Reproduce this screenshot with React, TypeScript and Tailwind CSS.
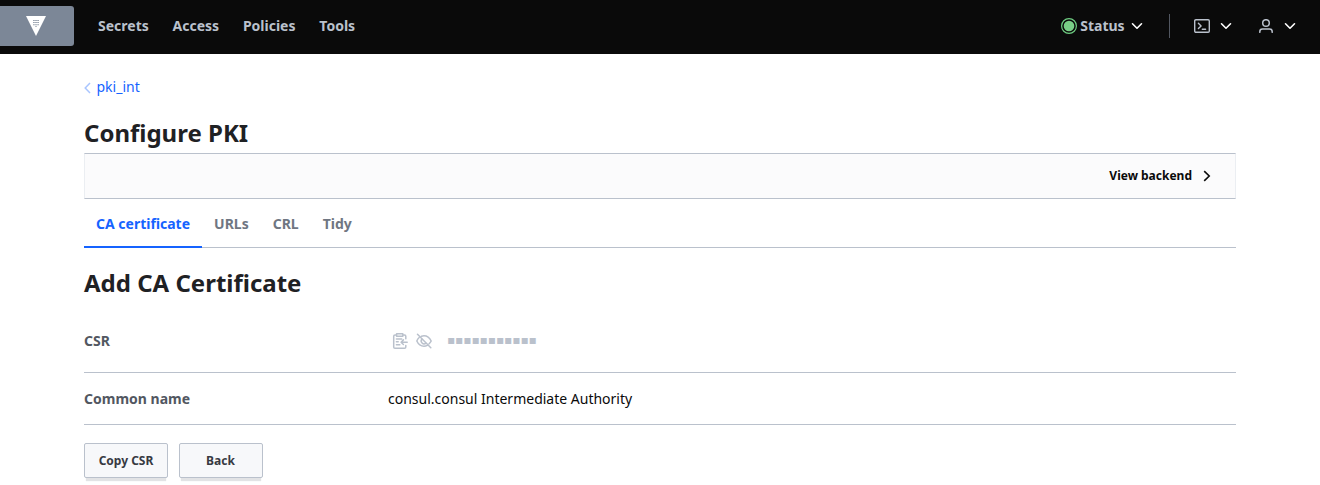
import React from 'react';

function ChevronDown() {
  return (
    <svg width="12" height="8" viewBox="0 0 12 8" fill="none" stroke="#ffffff" strokeWidth="1.6" strokeLinecap="round" strokeLinejoin="round">
      <path d="M1.5 1.75 6 6.25l4.5-4.5" />
    </svg>
  );
}

function VaultLogo() {
  return (
    <svg width="20" height="20" viewBox="0 0 20 20">
      <path d="M0 0h20L10 20z" fill="#ffffff" />
      <g fill="#9aa3b0">
        <path d="M7 4h1.8v1H7zM9.1 4h1.8v1H9.1zM11.2 4H13v1h-1.8zM7 6.1h1.8v1H7zM9.1 6.1h1.8v1H9.1zM11.2 6.1H13v1h-1.8zM7 8.2h1.8v1H7zM9.1 8.2h1.8v1H9.1zM11.2 8.2H13v1h-1.8zM9.1 10.2h1.8v.8H9.1z" />
      </g>
    </svg>
  );
}

function StatusIcon() {
  return (
    <svg width="16" height="16" viewBox="0 0 16 16">
      <circle cx="8" cy="8" r="7.4" fill="none" stroke="#6fce82" strokeWidth="1.2" />
      <circle cx="8" cy="8" r="5.3" fill="#79cf86" />
    </svg>
  );
}

function TerminalIcon() {
  return (
    <svg width="16" height="14" viewBox="0 0 16 14" fill="none" stroke="#bac1cc" strokeWidth="1.4" strokeLinecap="round" strokeLinejoin="round">
      <rect x=".7" y=".7" width="14.6" height="12.6" rx="1.2" />
      <path d="m4.4 4.2 2.7 2.7-2.7 2.7M8.3 10.3h3.3" />
    </svg>
  );
}

function UserIcon() {
  return (
    <svg width="14" height="14" viewBox="0 0 14 14" fill="none" stroke="#bac1cc" strokeWidth="1.5" strokeLinecap="round">
      <circle cx="7" cy="4" r="3.3" />
      <path d="M.8 13.3v-.6c0-1.6 1.2-2.6 2.7-2.6h7c1.5 0 2.7 1 2.7 2.6v.6" />
    </svg>
  );
}

function ClipboardIcon() {
  return (
    <svg width="16" height="16" viewBox="0 0 16 16" fill="none" stroke="#bac1cc" strokeWidth="1.5" strokeLinecap="round" strokeLinejoin="round">
      <path d="M4.4 1.9H3c-.8 0-1.3.5-1.3 1.3v10.7c0 .8.5 1.3 1.3 1.3h9.5c.8 0 1.3-.5 1.3-1.3v-1.4M13.8 5.8V3.2c0-.8-.5-1.3-1.3-1.3h-1.6" />
      <path d="M4.6.8h6.2v2.5H4.6z" />
      <path d="M4.4 6h5.3M4.4 8.8h1.8M4.4 11.8h3.4M15.2 9.2H9.2M11.4 6.9 9.1 9.2l2.3 2.3" />
    </svg>
  );
}

function EyeOffIcon() {
  return (
    <svg width="16" height="16" viewBox="0 0 16 16" fill="none" stroke="#bac1cc" strokeWidth="1.5" strokeLinecap="round" strokeLinejoin="round">
      <path d="m1.5 1.3 13.3 13.5M5.5 3.3C6.3 3 7.1 2.8 8 2.8c3.3 0 5.8 2.3 7.2 5.2-.5 1.1-1.2 2-2.1 2.8M3.2 4.5C2.1 5.4 1.4 6.6.8 8c1.4 3 3.9 5.2 7.2 5.2 1.2 0 2.3-.3 3.3-.8" />
      <path d="M5.8 6.2a2.9 2.9 0 0 0 4 4.1" />
    </svg>
  );
}

const navItems = ['Secrets', 'Access', 'Policies', 'Tools'];
const tabs = ['URLs', 'CRL', 'Tidy'];

export default function App() {
  return (
    <div className="h-[485px] w-full overflow-hidden bg-white font-['Noto_Sans',sans-serif] text-sm leading-[21px] text-[#0a0a0a]">
      <header className="flex h-[54px] items-start bg-[#0a0a0a] font-bold text-[#bac1cc]">
        <a className="mt-[6px] flex h-10 w-[74px] items-center justify-center rounded-r-[3px] bg-[#7c8797] pr-[2px]">
          <VaultLogo />
        </a>
        <nav className="ml-6 flex h-[51px] items-center gap-[23.8px]">
          {navItems.map((item) => (
            <a key={item}>{item}</a>
          ))}
        </nav>
        <div className="ml-auto flex h-[52px] items-center pr-6">
          <StatusIcon />
          <span className="ml-[3.5px] mr-[6.4px] pb-px">Status</span>
          <ChevronDown />
          <span className="ml-[26px] mr-6 h-6 w-px bg-[#525761]" />
          <TerminalIcon />
          <span className="ml-[10px] mr-[27px]"><ChevronDown /></span>
          <UserIcon />
          <span className="ml-[11px]"><ChevronDown /></span>
        </div>
      </header>

      <main className="mx-[84px]">
        <a className="mt-[22px] flex h-[21px] items-center text-[#1563ff]">
          <svg className="mr-[5.5px] mt-[2px]" width="7" height="12" viewBox="0 0 7 12" fill="none" stroke="#a9c5ff" strokeWidth="1.5">
            <path d="M6 1 1.2 6 6 11" />
          </svg>
          pki_int
        </a>
        <h1 className="mt-[17px] h-[39px] text-2xl leading-[37px] font-bold text-[#1f2124]">Configure PKI</h1>
        <div className="flex h-[46px] items-center justify-end border border-x-[#ebeef2] border-y-[#bac1cc] bg-[#fbfbfc] pr-6 text-xs font-bold">
          <span className="mr-[11px]">View backend</span>
          <svg width="8" height="12" viewBox="0 0 8 12" fill="none" stroke="#0a0a0a" strokeWidth="1.6">
            <path d="m1.2 1.2 5 4.8-5 4.8" />
          </svg>
        </div>
        <nav className="flex h-[49px] border-b border-[#bac1cc] font-bold text-[#6f7682]">
          <a className="h-[49px] border-b-2 border-[#1563ff] px-3 pt-[14px] text-[#1563ff]">CA certificate</a>
          {tabs.map((tab) => (
            <a key={tab} className="px-3 pt-[14px]">{tab}</a>
          ))}
        </nav>
        <h2 className="mt-4 h-[38px] text-2xl leading-[37px] font-bold text-[#1f2124]">Add CA Certificate</h2>
        <dl>
          <div className="flex h-[71px] items-center border-b border-[#bac1cc] pt-[7px]">
            <dt className="w-[308px] font-bold text-[#525761]">CSR</dt>
            <dd className="flex items-center">
              <ClipboardIcon />
              <span className="ml-2"><EyeOffIcon /></span>
              <span className="ml-[15.4px] font-['DejaVu_Sans',sans-serif] text-[7.8px] leading-4 tracking-[0.8px] text-[#bac1cc]">■■■■■■■■■■■</span>
            </dd>
          </div>
          <div className="flex h-[52px] items-center border-b border-[#bac1cc]">
            <dt className="w-[304px] font-bold text-[#525761]">Common name</dt>
            <dd>consul.consul Intermediate Authority</dd>
          </div>
        </dl>
        <div className="mt-[18px] flex gap-[11px] text-xs font-bold text-[#373a42]">
          <button className="h-[35px] w-[84px] rounded-[2px] border border-[#bac1cc] bg-[#f7f8fa] shadow-[0_5px_1px_-2px_#e2e3e5]">Copy CSR</button>
          <button className="h-[35px] w-[84px] rounded-[2px] border border-[#bac1cc] bg-[#f7f8fa] pr-px shadow-[0_5px_1px_-2px_#e2e3e5]">Back</button>
        </div>
      </main>
    </div>
  );
}
